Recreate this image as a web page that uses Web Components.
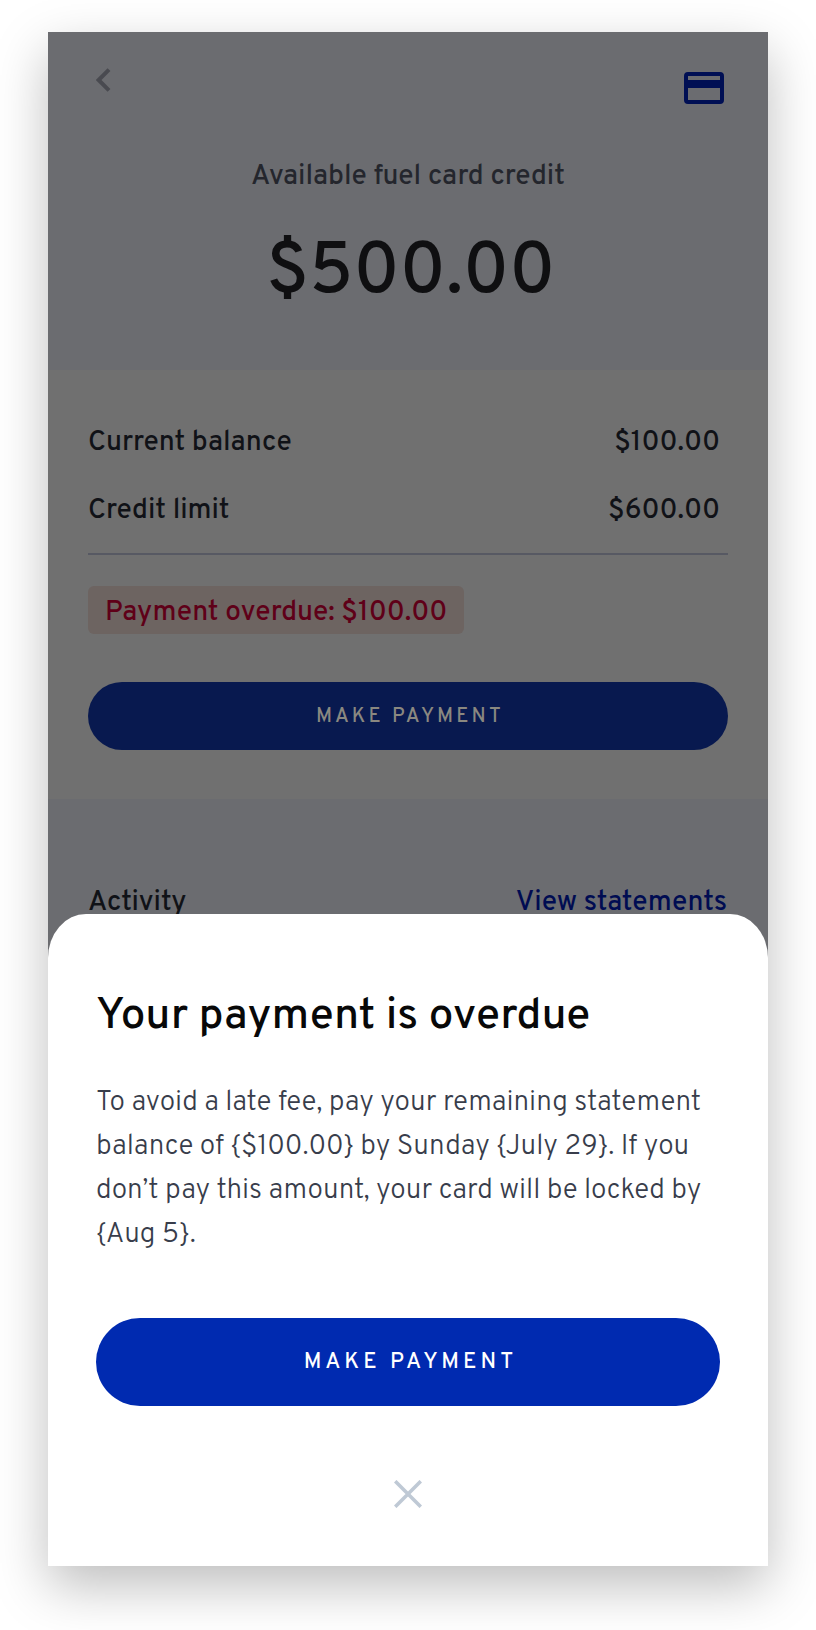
<!DOCTYPE html>
<html lang="en">
<head>
<meta charset="utf-8">
<title>Fuel card</title>
<style>
    body {
        margin: 0;
        background: #fff;
        font-family: Overpass, Roboto, "Liberation Sans", sans-serif;
    }
</style>
</head>
<body>

<fuel-screen>
    <credit-header label="Available fuel card credit" amount="$500.00"></credit-header>

    <balance-card>
        <balance-row label="Current balance">$100.00</balance-row>
        <balance-row label="Credit limit">$600.00</balance-row>
        <overdue-badge slot="status">Payment overdue: $100.00</overdue-badge>
        <pill-button slot="action">MAKE PAYMENT</pill-button>
    </balance-card>

    <activity-bar link="View statements">Activity</activity-bar>

    <bottom-sheet slot="sheet" heading="Your payment is overdue">
        To avoid a late fee, pay your remaining statement balance of {$100.00} by Sunday {July 29}. If you don’t pay this amount, your card will be locked by {Aug 5}.
        <pill-button slot="action" size="large">MAKE PAYMENT</pill-button>
    </bottom-sheet>
</fuel-screen>

<script>
(function() {
    /*
     *  Shared base: puts the template() markup in an open shadow root
     */
    class FuelElement extends HTMLElement {
        constructor() {
            super();

            const template = document.createElement('template');
            template.innerHTML = this.template();

            this.attachShadow({mode: 'open'});
            this.shadowRoot.appendChild(template.content.cloneNode(true));
        }

        // copy attributes into the elements that carry the same id
        connectedCallback() {
            for (const name of this.getAttributeNames()) {
                const target = this.shadowRoot.getElementById(name);

                if (target) {
                    target.textContent = this.getAttribute(name);
                }
            }
        }
    }

    class FuelScreen extends FuelElement {
        template() {
            return `
<style>
    /* all colours of the page under the sheet are the dimmed ones */
    :host {
        --tint: #6b6c70;
        --surface: #707070;
        --text: #101217;
        --text-soft: #24262d;
        --link: #000c52;

        display: flex;
        flex-direction: column;
        box-sizing: border-box;
        position: relative;
        width: 720px;
        height: 1534px;
        margin: 32px 48px 64px;
        background: var(--tint);
        color: var(--text);
        font-size: 28px;
        font-weight: 500;
        line-height: 44px;
        box-shadow: 0 20px 50px rgba(0, 0, 0, .26);
    }

    /* the sheet covers the lower part of the page */
    .sheet {
        position: absolute;
        left: 0;
        right: 0;
        bottom: 0;
    }
</style>
<slot></slot>
<div class="sheet"><slot name="sheet"></slot></div>
`;
        }
    }

    class CreditHeader extends FuelElement {
        template() {
            return `
<style>
    :host {
        display: flex;
        flex-direction: column;
        align-items: center;
        box-sizing: border-box;
        height: 337.5px;
        padding-top: 36px;
    }

    nav {
        display: flex;
        justify-content: space-between;
        align-self: stretch;
        box-sizing: border-box;
        height: 87px;
        padding: 0 44px 0 48px;
    }

    svg {
        display: block;
    }

    .card {
        margin-top: 4px;
    }

    #label {
        color: var(--text-soft);
    }

    #amount {
        margin-top: 29.5px;
        padding-left: 6px;
        color: #0f0f11;
        font-size: 72px;
        line-height: 90px;
    }
</style>
<nav>
    <svg width="15" height="24" viewBox="0 0 15 24"><path d="M13 1.6 2.6 12 13 22.4" fill="none" stroke="#494a50" stroke-width="4"/></svg>
    <svg class="card" width="40" height="32" viewBox="0 0 40 32"><path fill="#000f54" fill-rule="evenodd" d="M4 0h32a4 4 0 0 1 4 4v24a4 4 0 0 1-4 4H4a4 4 0 0 1-4-4V4a4 4 0 0 1 4-4zM4 4v4h32V4zM4 16v12h32V16z"/></svg>
</nav>
<div id="label"></div>
<div id="amount"></div>
`;
        }
    }

    class BalanceCard extends FuelElement {
        template() {
            return `
<style>
    :host {
        display: flex;
        flex-direction: column;
        align-items: flex-start;
        box-sizing: border-box;
        height: 429px;
        padding: 51px 40px 0;
        background: var(--surface);
    }

    .rows {
        display: flex;
        flex-direction: column;
        align-self: stretch;
        gap: 24px;
        padding-bottom: 20.5px;
        margin-bottom: 31px;
        border-bottom: 2px solid #575963;
    }

    .action {
        align-self: stretch;
        margin-top: 47.5px;
    }
</style>
<div class="rows"><slot></slot></div>
<slot name="status"></slot>
<div class="action"><slot name="action"></slot></div>
`;
        }
    }

    class BalanceRow extends FuelElement {
        template() {
            return `
<style>
    :host {
        display: flex;
        justify-content: space-between;
        padding-right: 8px;
        letter-spacing: -.04px;
    }
</style>
<span id="label"></span>
<span><slot></slot></span>
`;
        }
    }

    class OverdueBadge extends FuelElement {
        template() {
            return `
<style>
    :host {
        display: block;
        box-sizing: border-box;
        width: 376px;
        height: 48px;
        padding: 5px 0 0 17px;
        border-radius: 6px;
        background: #6d6461;
        color: #5f0018;
        white-space: nowrap;
    }
</style>
<slot></slot>
`;
        }
    }

    class PillButton extends FuelElement {
        template() {
            return `
<style>
    :host {
        display: block;
    }

    button {
        display: flex;
        align-items: center;
        justify-content: center;
        box-sizing: border-box;
        width: 100%;
        height: 68.5px;
        padding: 2px 0 0 4px;
        border: 0;
        border-radius: 44px;
        background: #08194f;
        color: #8a8880;
        font: inherit;
        font-size: 20px;
        letter-spacing: 3.25px;
    }

    :host([size="large"]) button {
        height: 88px;
        padding: 2px 0 0 5px;
        background: #002ab0;
        color: #fff;
        font-size: 22px;
        letter-spacing: 4.15px;
    }
</style>
<button type="button"><slot></slot></button>
`;
        }
    }

    class ActivityBar extends FuelElement {
        template() {
            return `
<style>
    :host {
        display: flex;
        justify-content: space-between;
        padding: 82.5px 41px 0 40px;
    }

    #link {
        color: var(--link);
    }
</style>
<span><slot></slot></span>
<span id="link"></span>
`;
        }
    }

    class BottomSheet extends FuelElement {
        template() {
            return `
<style>
    :host {
        display: flex;
        flex-direction: column;
        box-sizing: border-box;
        height: 652px;
        padding: 74.5px 48px 0;
        border-radius: 38px 38px 0 0 / 44px 44px 0 0;
        background: #fff;
        color: #383d4b;
    }

    h1 {
        margin: 0 0 36.5px;
        color: #080808;
        font-size: 44px;
        font-weight: 500;
        line-height: 56px;
        letter-spacing: -.05px;
    }

    p {
        margin: 0 0 61px;
        font-weight: 300;
        letter-spacing: -.03px;
    }

    svg {
        align-self: center;
        margin-top: 74px;
    }
</style>
<h1 id="heading"></h1>
<p><slot></slot></p>
<slot name="action"></slot>
<svg width="28" height="28" viewBox="0 0 28 28"><path d="M1.2 1.2 26.8 26.8M26.8 1.2 1.2 26.8" fill="none" stroke="#bfc9d5" stroke-width="3.6"/></svg>
`;
        }
    }

    customElements.define('fuel-screen', FuelScreen);
    customElements.define('credit-header', CreditHeader);
    customElements.define('balance-card', BalanceCard);
    customElements.define('balance-row', BalanceRow);
    customElements.define('overdue-badge', OverdueBadge);
    customElements.define('pill-button', PillButton);
    customElements.define('activity-bar', ActivityBar);
    customElements.define('bottom-sheet', BottomSheet);
})();
</script>
</body>
</html>
